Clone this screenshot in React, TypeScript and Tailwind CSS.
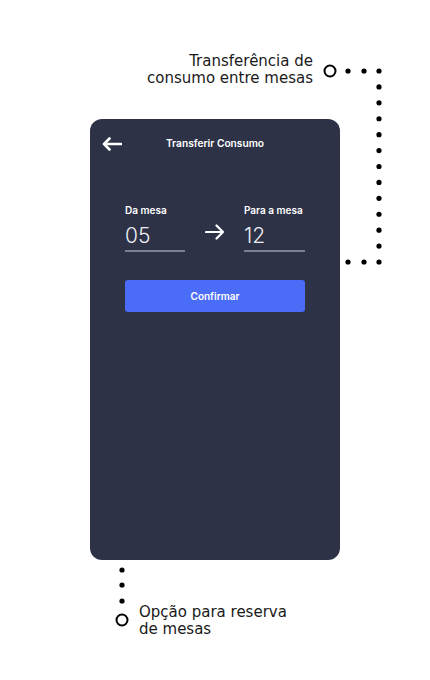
import React from "react";

function Dots() {
  const vert: number[] = [];
  for (let i = 0; i < 13; i++) vert.push(71 + (i * (262 - 71)) / 12);
  return (
    <svg className="absolute left-0 top-0" width={430} height={680} viewBox="0 0 430 680">
      <circle cx={330} cy={71} r={5.5} fill="none" stroke="#000" strokeWidth={2} />
      <circle cx={348} cy={71} r={2.6} fill="#000" />
      <circle cx={364} cy={71} r={2.6} fill="#000" />
      {vert.map((y, i) => (
        <circle key={i} cx={379} cy={y} r={2.6} fill="#000" />
      ))}
      <circle cx={348} cy={262} r={2.6} fill="#000" />
      <circle cx={364} cy={262} r={2.6} fill="#000" />
      <circle cx={122} cy={570} r={2.6} fill="#000" />
      <circle cx={122} cy={585} r={2.6} fill="#000" />
      <circle cx={122} cy={601} r={2.6} fill="#000" />
      <circle cx={122} cy={620} r={5.5} fill="none" stroke="#000" strokeWidth={2} />
    </svg>
  );
}

export default function App() {
  return (
    <div className="relative w-[430px] h-[680px] bg-white overflow-hidden">
      <div className="pl-[90px] pt-[119px]">
        <div
          className="w-[250px] h-[441px] rounded-[12px] bg-[#2d3247] text-white"
          style={{ fontFamily: "Inter, 'Liberation Sans', sans-serif" }}
        >
          <div className="relative h-[50px] flex items-center justify-center">
            <svg className="absolute left-[12px] top-[18px]" width={20} height={14} viewBox="0 0 20 14">
              <path d="M19 7H2M7.5 1.5L2 7l5.5 5.5" fill="none" stroke="#fff" strokeWidth={2.6} strokeLinecap="round" strokeLinejoin="round" />
            </svg>
            <span className="text-[10.2px] font-semibold">Transferir Consumo</span>
          </div>
          <div className="px-[35px] pt-[34px]">
            <div className="flex items-start justify-between">
              <div className="w-[60px]">
                <div className="text-[10px] font-semibold leading-[14px]">Da mesa</div>
                <div className="mt-[6px] text-[21px] font-light leading-[26px] text-[#eceef3]">05</div>
                <div className="mt-[1px] h-[2px] bg-[#7b7f8f]" />
              </div>
              <div className="pt-[21px]">
                <svg width={20} height={16} viewBox="0 0 20 16">
                  <path d="M1 8h17M11.5 1.5L18 8l-6.5 6.5" fill="none" stroke="#fff" strokeWidth={2.2} strokeLinecap="round" strokeLinejoin="round" />
                </svg>
              </div>
              <div className="w-[61px]">
                <div className="text-[10px] font-semibold leading-[14px] whitespace-nowrap">Para a mesa</div>
                <div className="mt-[6px] text-[21px] font-light leading-[26px] text-[#eceef3]">12</div>
                <div className="mt-[1px] h-[2px] bg-[#7b7f8f]" />
              </div>
            </div>
            <button className="mt-[28px] w-[180px] h-[32px] rounded-[3px] bg-[#4a6cf7] text-[10px] font-semibold text-white">
              Confirmar
            </button>
          </div>
        </div>
      </div>

      <Dots />

      <div
        className="absolute right-[117px] top-[53px] text-right text-[15px] leading-[17px] text-[#1a1a1a]"
        style={{ fontFamily: "'DejaVu Sans', sans-serif" }}
      >
        <div>Transferência de</div>
        <div>consumo entre mesas</div>
      </div>
      <div
        className="absolute left-[139px] top-[604px] text-[15px] leading-[17px] text-[#1a1a1a]"
        style={{ fontFamily: "'DejaVu Sans', sans-serif" }}
      >
        <div>Opção para reserva</div>
        <div>de mesas</div>
      </div>
    </div>
  );
}
